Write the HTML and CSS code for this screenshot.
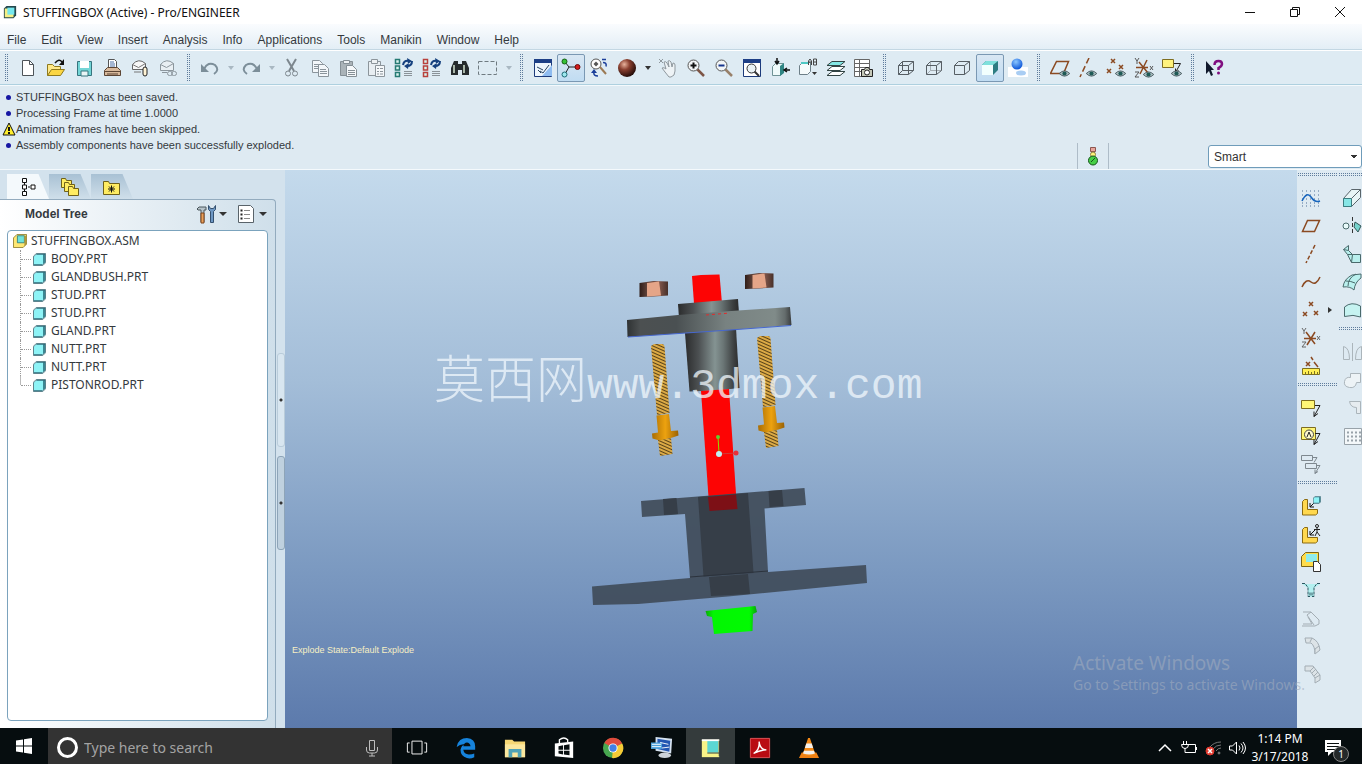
FILE: index.html
```html
<!DOCTYPE html>
<html lang="en">
<head>
    <meta charset="UTF-8">
    <meta name="viewport" content="width=device-width, initial-scale=1.0">
    <title>STUFFINGBOX (Active) - Pro/ENGINEER</title>
    <link rel="stylesheet" href="styles.css">
</head>
<body>

<!-- Shapes used more than once -->
<svg class="defs" aria-hidden="true">
    <symbol id="part" viewBox="0 0 14 14">
        <path d="M1 4l3-3h9v9l-3 3H1z" fill="#2f6a78"/>
        <path d="M1 4l2-2h8v10H1z" fill="#8ef3f6"/>
        <path d="M11 2h2v8l-2 2z" fill="#3b8793"/>
        <path d="M.5 3.5l3-3h10v10l-3 3H.5z" fill="none" stroke="#4a7580"/>
    </symbol>
    <symbol id="assembly" viewBox="0 0 16 16">
        <path d="M.5 4.500l4-4h11v11l-4 4H.5z" fill="#ffe873" stroke="#8b7a2c"/>
        <path d="M5 2h8v8H5z" fill="#6fe3da" stroke="#2e7f80"/>
        <path d="M13 2h2v10l-2 2z" fill="#b19a3a"/>
    </symbol>
    <symbol id="eye" viewBox="0 0 12 8">
        <path d="M0 4q6-6 12 0q-6 6-12 0z" fill="#a9bcc0" stroke="#44565a"/>
        <circle cx="6" cy="4" r="2.400" fill="#1f5a56"/>
    </symbol>
    <symbol id="bracket" viewBox="0 0 20 20">
        <path d="M1.500 5.500l2-2h3v10h10v4l-2 1.500h-13z" fill="#ffd84e" stroke="#8b6b12"/>
        <path d="M14 6l-5 5m0-4v4h4" stroke="#111" fill="none"/>
    </symbol>
    <symbol id="regen" viewBox="0 0 20 20">
        <path d="M1.500 1.500h4v4h-4zM1.500 8h4v4h-4zM1.500 14.500h4v4h-4z" fill="#d9f3ee" stroke="currentColor" stroke-width="1.500"/>
        <path d="M9 7q1-5 6-4M18 3q0 5-5 5" fill="none" stroke="#15407e" stroke-width="2"/>
        <path d="M13 0l5 3-4 3zM15 5l-5 3 4 3z" fill="#15407e"/>
        <path d="M10 13.500h8M10 15.500h8M10 17.500h8" stroke="#8a9298"/>
    </symbol>
</svg>

<header class="titlebar">
    <svg class="app-icon" viewBox="0 0 16 16"><path d="M1 4l3-3h11v11l-3 3H1z" fill="#25474c"/><path d="M2 4h10v10H2z" fill="#f6ef83"/><path d="M5 3h8v8H5z" fill="#75e8ee"/></svg>
    <h1>STUFFINGBOX (Active) - Pro/ENGINEER</h1>
    <div class="window-buttons">
        <button aria-label="Minimize"><svg viewBox="0 0 12 12"><path d="M1 6.500h10"/></svg></button>
        <button aria-label="Restore"><svg viewBox="0 0 12 12"><path d="M1.500 3.500h7v7h-7zM3.500 3.500v-2h7v7h-2"/></svg></button>
        <button aria-label="Close"><svg viewBox="0 0 12 12"><path d="M1 1l10 10M11 1L1 11"/></svg></button>
    </div>
</header>

<nav class="menubar">
    <button>File</button>
    <button>Edit</button>
    <button>View</button>
    <button>Insert</button>
    <button>Analysis</button>
    <button>Info</button>
    <button>Applications</button>
    <button>Tools</button>
    <button>Manikin</button>
    <button>Window</button>
    <button>Help</button>
</nav>

<div class="toolbar">
    <span class="grip"></span>
    <button class="tool" aria-label="New"><svg viewBox="0 0 20 20"><path d="M4.500 2.500h7l4 4v11h-11z" fill="#fff" stroke="#4d5358"/><path d="M11.500 2.500v4h4" stroke="#4d5358"/></svg></button>
    <button class="tool" aria-label="Open"><svg viewBox="0 0 20 20"><path d="M1.500 17.500v-11h5l2 2h6v3" fill="#ffe98a" stroke="#8f7a1d"/><path d="M1.500 17.500l4-6h13l-4 6z" fill="#fbd643" stroke="#8f7a1d"/><path d="M9 5q4-5 7-1" stroke="#111" stroke-width="1.500"/><path d="M18 1v6h-5z" fill="#111"/></svg></button>
    <button class="tool" aria-label="Save"><svg viewBox="0 0 20 20"><path d="M3.500 3.500h14v14h-14z" fill="#73d5d6" stroke="#37747e"/><path d="M6 3h9v7H6z" fill="#fff"/><path d="M7 13h7v5H7z" fill="#e9f5f6" stroke="#37747e"/></svg></button>
    <button class="tool" aria-label="Print"><svg viewBox="0 0 20 20"><path d="M6.500 9.500v-8h6l2 2v6" fill="#fff" stroke="#555"/><path d="M8 4h4M8 6h5M8 8h5" stroke="#4b6ea5"/><path d="M2.500 12.500l3-3h10l3 3v5h-16z" fill="#d8b99c" stroke="#5c4534"/><path d="M2 13.500h17M5 16h11" stroke="#5c4534"/></svg></button>
    <button class="tool" aria-label="Send mail"><svg viewBox="0 0 20 20"><path d="M2.500 11.500v-5q6-7 13-1v6z" fill="#f8f8f8" stroke="#666"/><path d="M2.500 6.500l6 3 7-4M4 14h7" stroke="#777"/><rect x="13" y="9" width="4" height="9" rx="2" fill="#fff3d4" stroke="#222"/></svg></button>
    <button class="tool" aria-label="Send link"><svg viewBox="0 0 20 20" stroke="#8c969d"><path d="M2.500 12.500v-6q6-7 13-1v7z" fill="#e9eff3"/><path d="M2.500 6.500l6 3 7-4M4 14.500h5"/><rect x="9.500" y="13.500" width="5" height="4" rx="2"/><rect x="13.500" y="13.500" width="5" height="4" rx="2"/></svg></button>
    <span class="grip"></span>
    <button class="tool" aria-label="Undo"><svg viewBox="0 0 20 20"><path d="M4 11q4-8 11-4 5 5-1 9" stroke="#7c8e99" stroke-width="2"/><path d="M1 6v8h8z" fill="#7c8e99"/></svg></button>
    <button class="drop faded" aria-label="Undo list"></button>
    <button class="tool" aria-label="Redo"><svg viewBox="0 0 20 20"><path d="M16 11q-4-8-11-4-5 5 1 9" stroke="#7c8e99" stroke-width="2"/><path d="M19 6v8h-8z" fill="#7c8e99"/></svg></button>
    <button class="drop faded" aria-label="Redo list"></button>
    <button class="tool" aria-label="Cut"><svg viewBox="0 0 20 20" stroke="#7d878e"><path d="M5 1l7 12M14 1L7 13" stroke-width="2"/><circle cx="6" cy="15.500" r="2.500"/><circle cx="13" cy="15.500" r="2.500"/></svg></button>
    <button class="tool" aria-label="Copy"><svg viewBox="0 0 20 20" stroke="#8a949b" fill="#f3f7fa"><path d="M2.500 2.500h7l3 3v9h-10z"/><path d="M4 6.500h6M4 8.500h6M4 10.500h6"/><path d="M8.500 6.500h6l4 4v8h-10z"/><path d="M10 11.500h6M10 13.500h7M10 15.500h7"/></svg></button>
    <button class="tool" aria-label="Paste"><svg viewBox="0 0 20 20" stroke="#858f95"><path d="M2.500 3.500h12v14h-12z" fill="#aab3b8"/><path d="M5.500 2.500h6v3h-6z" fill="#eef2f4"/><path d="M8.500 7.500h6l4 4v7h-10z" fill="#f5f8fa"/><path d="M10 12.500h7M10 14.500h7M10 16.500h7"/></svg></button>
    <button class="tool" aria-label="Paste special"><svg viewBox="0 0 20 20" stroke="#8c959b"><path d="M2.500 3.500h12v14h-12z" fill="#e8eef2"/><path d="M5.500 1.500h6v4h-6z" fill="#eef2f4"/><path d="M9.500 7.500h9v11h-9z" fill="#f5f8fa"/><path d="M11 10.500h2M11 13.500h2M11 16h2M14 10.500h3M14 13.500h3M14 16h3"/></svg></button>
    <button class="tool teal" aria-label="Regenerate"><svg><use href="#regen"/></svg></button>
    <button class="tool red" aria-label="Regenerate manager"><svg><use href="#regen"/></svg></button>
    <button class="tool" aria-label="Find"><svg viewBox="0 0 20 20"><path d="M4 3h4v3h4V3h4l3 7v7h-7v-5H8v5H1v-7z" fill="#262b2d"/><path d="M4 7v8M14 7v8" stroke="#a9b6a8" stroke-width="2"/></svg></button>
    <button class="tool" aria-label="Select box"><svg viewBox="0 0 20 20"><rect x=".5" y="3.500" width="18" height="13" stroke="#6f7a80" stroke-dasharray="4 2"/></svg></button>
    <button class="drop faded" aria-label="Select options"></button>
    <span class="grip"></span>
    <button class="tool" aria-label="Repaint"><svg viewBox="0 0 20 20"><path d="M1.500 1.500h17v17h-17z" fill="#eef6fd" stroke="#1c3a7a"/><path d="M1 1h18v4H1z" fill="#1d3f86"/><path d="M9 18l10-11v11z" fill="#8fbcf0"/><path d="M16 7l-6 8-3-2M4 9l6 3M5 12l3 3" stroke="#26415f"/></svg></button>
    <button class="tool pressed" aria-label="Spin center"><svg viewBox="0 0 20 20"><path d="M4 4l4 5h8M8 9l-4 7" stroke="#222"/><circle cx="3.500" cy="3.500" r="2.500" fill="#35c135" stroke="#146014"/><circle cx="16.500" cy="9" r="2.500" fill="#d31d1d" stroke="#6d0b0b"/><circle cx="3.500" cy="16.500" r="2.500" fill="#9ee8ef" stroke="#1d6a75"/></svg></button>
    <button class="tool" aria-label="Orient mode"><svg viewBox="0 0 20 20"><circle cx="7" cy="6" r="5" fill="#fff" stroke="#555"/><path d="M7 3.500l2.500 2.500L7 8.500 4.500 6z" fill="#555"/><path d="M11 9l6 7" stroke="#9c7a54" stroke-width="2"/><path d="M13 1.500h4M14 4.500q4 0 3 4M9 18q-5 0-4-4" stroke="#1c3f9a" stroke-width="1.500"/><path d="M2 15l3-4 3 4z" fill="#1c3f9a"/></svg></button>
    <button class="tool" aria-label="Appearance"><svg viewBox="0 0 20 20"><defs><radialGradient id="ball" cx=".35" cy=".3" r=".75"><stop offset="0" stop-color="#e8b29c"/><stop offset=".4" stop-color="#8a4030"/><stop offset="1" stop-color="#1c0805"/></radialGradient></defs><circle cx="10" cy="10" r="9" fill="url(#ball)"/></svg></button>
    <button class="drop" aria-label="Appearance list"></button>
    <button class="tool" aria-label="Pan"><svg viewBox="0 0 20 20" stroke="#8f989e"><path d="M1 1l4 4M5 1L1 5"/><path d="M7 14l-3-4q2-1 4 1L6 4q2-1 3 1l2 4-1-6q2-1 3 1l1 5 1-4q2 0 2 2v6q0 5-4 6H11z" fill="#eef3f6"/></svg></button>
    <button class="tool" aria-label="Zoom in"><svg viewBox="0 0 20 20"><path d="M11 11l7 7" stroke="#7d5546" stroke-width="2.500"/><circle cx="7.500" cy="7.500" r="5.500" fill="#f2f5f6" stroke="#555"/><path d="M4.500 7.500h6M7.500 4.500v6" stroke="#111" stroke-width="2"/></svg></button>
    <button class="tool" aria-label="Zoom out"><svg viewBox="0 0 20 20"><path d="M11 11l7 7" stroke="#98806a" stroke-width="2.500"/><circle cx="7.500" cy="7.500" r="5.500" fill="#f2f5f6" stroke="#555"/><path d="M4.500 7.500h6" stroke="#16348c" stroke-width="2"/></svg></button>
    <button class="tool" aria-label="Refit"><svg viewBox="0 0 20 20"><path d="M1.500 1.500h17v17h-17z" fill="#fff" stroke="#1c3a7a"/><path d="M1 1h18v4H1z" fill="#1d3f86"/><path d="M12 13l5 5" stroke="#333" stroke-width="2"/><circle cx="9.500" cy="10.500" r="4.500" fill="#eaf3f6" stroke="#333"/></svg></button>
    <button class="tool" aria-label="Reorient"><svg viewBox="0 0 20 20"><path d="M2.500 8.500l3-3h8v9l-3 3h-8z" fill="#effafa" stroke="#6f9295"/><path d="M10 8l4-3v10l-4 3z" fill="#2f8583"/><path d="M7 0v5m-2-2l2 3 2-3M20 12h-5m2-2l-3 2 3 2" stroke="#111" stroke-width="1.500"/></svg></button>
    <button class="tool" aria-label="Saved views"><svg viewBox="0 0 20 20"><path d="M1.500 7.500l3-3h8v9l-3 3h-8z" fill="#f6fbfc" stroke="#6d7f88"/><path d="M3 5h8" stroke="#4fc8c4" stroke-width="2"/><path d="M10.500 7V3l1.500-2 1.500 2v4m-3-3h3M15.500 1v6h3V1h-3m0 3h3" stroke="#444"/><path d="M14 14h5l-2.500 3z" fill="#333"/></svg></button>
    <button class="tool" aria-label="Layers"><svg viewBox="0 0 20 20" stroke="#344"><path d="M1 17.500l5-4h13l-5 4z" fill="#fff"/><path d="M1 12.500l5-4h13l-5 4z" fill="#fff"/><path d="M1 7.500l5-4h13l-5 4z" fill="#84e7e4"/></svg></button>
    <button class="tool" aria-label="View manager"><svg viewBox="0 0 20 20"><path d="M.5 1.500h15v17H.5zM5.500 1v17M1 5.500h14M1 9.500h14M1 13.500h14" fill="#fff" stroke="#666"/><path d="M7.500 11.500h3l1-2h3l1 2h3v7h-11z" fill="#c5c8b8" stroke="#222"/><circle cx="13" cy="14.500" r="2.500" fill="#fff" stroke="#222"/></svg></button>
    <span class="grip"></span>
    <button class="tool" aria-label="Wireframe"><svg viewBox="0 0 20 20" stroke="#565e64"><path d="M2.500 7.500h10v9h-10zM6.500 3.500h11v9h-11zM2.500 7.500l4-4M12.500 7.500l5-4M12.500 16.500l5-4M2.500 16.500l4-4"/></svg></button>
    <button class="tool" aria-label="Hidden line"><svg viewBox="0 0 20 20" stroke="#565e64"><path d="M6.500 3.500v9h11M2.500 16.500l4-4" stroke="#a4adb3"/><path d="M2.500 7.500h10v9h-10zl4-4h11v9l-5 4M12.500 7.500l5-4"/></svg></button>
    <button class="tool" aria-label="No hidden"><svg viewBox="0 0 20 20" stroke="#565e64"><path d="M2.500 7.500h10v9h-10zl4-4h11v9l-5 4M12.500 7.500l5-4"/></svg></button>
    <button class="tool pressed" aria-label="Shading"><svg viewBox="0 0 20 20"><path d="M2 7l4-4h12v9l-5 5H2z" fill="#2d7d82"/><path d="M2 7l4-4h12l-5 4z" fill="#7fe0dc"/><path d="M2 7h11v10H2z" fill="#f2fffe"/></svg></button>
    <button class="tool" aria-label="Enhanced realism"><svg viewBox="0 0 20 20"><defs><radialGradient id="bluedot" cx=".4" cy=".3" r=".7"><stop offset="0" stop-color="#8cc7ff"/><stop offset="1" stop-color="#0b55d8"/></radialGradient></defs><path d="M0 9h20v10H0z" fill="#fff"/><ellipse cx="13" cy="15" rx="5" ry="2.500" fill="#a9cdf3"/><circle cx="9" cy="6" r="5.500" fill="url(#bluedot)"/></svg></button>
    <span class="grip"></span>
    <button class="tool" aria-label="Plane display"><svg viewBox="0 0 20 20"><path d="M6.500 3.500h12l-5 12H.5z" stroke="#8b4a22" stroke-width="1.500"/><use href="#eye" x="9" y="12" width="11" height="7"/></svg></button>
    <button class="tool" aria-label="Axis display"><svg viewBox="0 0 20 20"><path d="M11 0L2 19" stroke="#8b4a22" stroke-width="1.500" stroke-dasharray="6 3"/><use href="#eye" x="8" y="12" width="11" height="7"/></svg></button>
    <button class="tool" aria-label="Point display"><svg viewBox="0 0 20 20"><path d="M5 1l4 4m0-4L5 5M13 7l4 4m0-4l-4 4M1 11l4 4m0-4l-4 4" stroke="#8b4a22" stroke-width="1.500"/><use href="#eye" x="9" y="12" width="11" height="7"/></svg></button>
    <button class="tool" aria-label="Coordinate display"><svg viewBox="0 0 20 20"><path d="M5 4l9 11M13 2L6 16M2 9.500h12" stroke="#8b4a22" stroke-width="1.500"/><path d="M1 0l2 3 2-3M3 3v3M1 14h4l-4 5h4M16 8l3 4m0-4l-3 4" stroke="#555"/><use href="#eye" x="9" y="13" width="11" height="7"/></svg></button>
    <button class="tool" aria-label="Annotation display"><svg viewBox="0 0 20 20"><path d="M.5 1.500h11v8H.5z" fill="#fff37d" stroke="#7e6d20"/><path d="M12 5.500h6.500l-5 9m0-4v4l3-2" stroke="#222"/><use href="#eye" x="9" y="12" width="11" height="7"/></svg></button>
    <span class="grip"></span>
    <button class="tool" aria-label="Context help"><svg viewBox="0 0 20 20"><path d="M2 3v13l3-3 2 5 2-1-2-5h3z" fill="#111a2c"/><path d="M10.500 7q0-4 4-4 3.500 0 3.500 3 0 2-3.500 4v2" stroke="#800f80" stroke-width="2.500"/><circle cx="14.500" cy="15" r="1.500" fill="#800f80"/></svg></button>
</div>

<section class="message-area">
    <ul class="messages">
        <li>STUFFINGBOX has been saved.</li>
        <li>Processing Frame at time 1.0000</li>
        <li class="warning"><svg viewBox="0 0 14 14"><path d="M7 1l6 12H1z" fill="#ffee2e" stroke="#111"/><path d="M7 5v4M7 10v2" stroke="#111" stroke-width="2"/></svg>Animation frames have been skipped.</li>
        <li>Assembly components have been successfully exploded.</li>
    </ul>
    <div class="status">
        <span class="regen-light"><svg viewBox="0 0 12 20"><path d="M3.500 1.500h5v4h-5z" fill="#e8a49b" stroke="#8c5750"/><circle cx="6" cy="8.500" r="2.500" fill="#fff27a" stroke="#8d8240"/><circle cx="6" cy="14.500" r="4.500" fill="#46cf46" stroke="#14521a"/><path d="M4 16l4-4" stroke="#14521a"/></svg></span>
        <select aria-label="Selection filter">
            <option>Smart</option>
            <option>Geometry</option>
            <option>Datums</option>
        </select>
    </div>
</section>

<main class="workspace">
    <aside class="navigator">
        <div class="nav-tabs">
            <button class="nav-tab active" aria-label="Model tree"><svg viewBox="0 0 20 20" stroke="#111"><path d="M4.500 1.500h4v4h-4zM4.500 8h4v4h-4zM4.500 14.500h4v4h-4zM13 8h4v4h-4zM6.500 6v2M6.500 12v2M10 10h2" fill="#fff"/></svg></button>
            <button class="nav-tab" aria-label="Folder browser"><svg viewBox="0 0 20 20" fill="#ffec62" stroke="#6f611b"><path d="M1.500 1.500h4l1 2h5v7h-10z"/><path d="M4.500 5.500h4l1 2h5v7h-10z"/><path d="M8.500 9.500h4l1 2h5v7h-10z"/></svg></button>
            <button class="nav-tab" aria-label="Favorites"><svg viewBox="0 0 20 20"><path d="M1.500 4.500h5l1 2h10v11h-16z" fill="#ffec62" stroke="#6f611b"/><path d="M9.500 8.500v7M6 12h7M7 9.500l5 5M12 9.500l-5 5" stroke="#111"/></svg></button>
        </div>
        <div class="nav-panel">
            <div class="nav-header">
                <h2>Model Tree</h2>
                <button class="nav-tool" aria-label="Settings"><svg viewBox="0 0 20 20"><path d="M1 5l2-2h7v3H8v12H5V6H2z" fill="#b8c4ca" stroke="#4a565d"/><path d="M5 9h3v10H5z" fill="#e9a05b" stroke="#7a431a"/><path d="M12.500 1.500v4l2 2v11h3v-11l2-2v-4l-2 3h-3z" fill="#6d97c4" stroke="#34506f"/></svg><span class="caret"></span></button>
                <button class="nav-tool" aria-label="Show"><svg viewBox="0 0 20 20"><path d="M2.500 1.500h12l3 3v14h-15z" fill="#fff" stroke="#59636a"/><path d="M8 6.500h6M8 10.500h6M8 14.500h6" stroke="#888"/><path d="M4.500 6.500h2M4.500 10.500h2M4.500 14.500h2" stroke="#222" stroke-width="2"/></svg><span class="caret"></span></button>
            </div>
            <div class="tree">
                <div class="tree-root"><svg><use href="#assembly"/></svg>STUFFINGBOX.ASM</div>
                <ul>
                    <li><svg><use href="#part"/></svg>BODY.PRT</li>
                    <li><svg><use href="#part"/></svg>GLANDBUSH.PRT</li>
                    <li><svg><use href="#part"/></svg>STUD.PRT</li>
                    <li><svg><use href="#part"/></svg>STUD.PRT</li>
                    <li><svg><use href="#part"/></svg>GLAND.PRT</li>
                    <li><svg><use href="#part"/></svg>NUTT.PRT</li>
                    <li><svg><use href="#part"/></svg>NUTT.PRT</li>
                    <li><svg><use href="#part"/></svg>PISTONROD.PRT</li>
                </ul>
            </div>
        </div>
        <div class="sashes">
            <button class="sash" aria-label="Collapse tree"></button>
            <button class="sash dark" aria-label="Collapse navigator"></button>
        </div>
    </aside>

    <section class="viewport">
        <svg class="model" viewBox="285 170 1012 558" role="img" aria-label="Exploded stuffing box assembly">
            <defs>
                <linearGradient id="tube"><stop offset="0" stop-color="#2b2c2d"/><stop offset=".25" stop-color="#4c5052"/><stop offset=".55" stop-color="#849392"/><stop offset=".7" stop-color="#6b7676"/><stop offset=".9" stop-color="#3c3f40"/><stop offset="1" stop-color="#2a2a2b"/></linearGradient>
                <linearGradient id="plate"><stop offset="0" stop-color="#2f3233"/><stop offset=".08" stop-color="#4c5051"/><stop offset=".3" stop-color="#4a5052"/><stop offset=".6" stop-color="#788281"/><stop offset=".9" stop-color="#808b89"/><stop offset=".96" stop-color="#656d6d"/><stop offset="1" stop-color="#3a3d3e"/></linearGradient>
                <linearGradient id="brass"><stop offset="0" stop-color="#a96d04"/><stop offset=".5" stop-color="#eda20f"/><stop offset="1" stop-color="#9a6205"/></linearGradient>
                <linearGradient id="green"><stop offset="0" stop-color="#0ba80b"/><stop offset=".15" stop-color="#02f602"/><stop offset=".85" stop-color="#02fa02"/><stop offset="1" stop-color="#0ba00b"/></linearGradient>
                <linearGradient id="nutside"><stop offset="0" stop-color="#2f1d18"/><stop offset=".25" stop-color="#5d4037"/><stop offset=".7" stop-color="#80564a"/><stop offset="1" stop-color="#47302a"/></linearGradient>
                <pattern id="thread" width="14" height="3" patternUnits="userSpaceOnUse" patternTransform="rotate(24)"><path d="M0 0h14v3H0z" fill="#dcaa45"/><path d="M0 2h14v1H0z" fill="#59431a"/></pattern>
            </defs>

            <!-- nuts -->
            <g id="nut"><path d="M639.500 283l14-2 14.500.5v14l-14 1-14.500.5z" fill="url(#nutside)"/><path d="M647 283l12-1.500 2 14-14 1z" fill="#e5a588"/></g>
            <use href="#nut" x="105.500" y="-8"/>

            <!-- rod top and gland -->
            <path d="M692 276l9-1 18.500-.5 2.500 29h-28z" fill="#fd0404"/>
            <path d="M678 304l60-5 1 15-60 4z" fill="url(#tube)"/>
            <path d="M685 333l51-5 3.500 60-9 1-28 2-13 .5z" fill="url(#tube)"/>
            <path d="M627 320l51-5 60-4.500 52-3.500 1.500 18-55 4.500-109 7.500z" fill="url(#plate)"/>
            <path d="M628 337l109-7.500 54-4" stroke="#4667cf"/>
            <path d="M706 315l24-2" stroke="#e02c2c" stroke-dasharray="3 3"/>

            <!-- piston rod -->
            <path d="M701 391l28-2 8 120-27.500 2z" fill="#fd0404"/>

            <!-- studs -->
            <g id="stud">
                <path d="M651 346l3-2h9l1.500 2 5 67-12.500 2z" fill="url(#thread)"/>
                <path d="M658 440l13-2 1.500 16-12.500 2z" fill="url(#thread)"/>
                <path d="M656.500 415.500l12.500-1.500 2 17 7-.5.500 5-6 2-13 3-7-2-.5-5 6-1z" fill="url(#brass)"/>
            </g>
            <use href="#stud" x="106" y="-8"/>

            <!-- transparent body -->
            <path d="M641 501l163.500-13 1.500 17-41.500 3.500L768 572l98-7 1 18-139 13.500-90 7.500-45 1-1-18.500 98-8.500-5-64-43 3z" fill="#414c5a" fill-opacity=".93"/>
            <path d="M698 497l50-4 5.500 80-50 3.500zM663 499l13.500-1 1.500 16-14 1zM768.500 491l13.500-1 1.500 16-14 1zM709 577l39-3 2 20-39 2z" fill="#363e48"/>
            <path d="M690 577l78-6" stroke="#2c333d"/>
            <path d="M708 497l28-2.500 1.500 14.500-28 2z" fill="#7d1016"/>

            <!-- gland bush -->
            <path d="M705.500 611l50-5 1.500 6-4 2-.5 17-38.500 3-2-17-5-1z" fill="url(#green)"/>

            <!-- spin center -->
            <path d="M718 437l1 16" stroke="#8ce000"/>
            <path d="M719 454l17-1" stroke="#d23a3a"/>
            <circle cx="718" cy="437" r="2" fill="#5fd02e"/><circle cx="736" cy="453" r="2.500" fill="#ea2f39"/><circle cx="719" cy="454" r="3" fill="#bff1f4"/>
        </svg>
        <p class="explode-state">Explode State:Default Explode</p>
        <p class="watermark"><span class="han">莫西网</span>www.3dmox.com</p>
        <div class="activate">
            <strong>Activate Windows</strong>
            <span>Go to Settings to activate Windows.</span>
        </div>
    </section>

    <aside class="feature-bar">
        <div class="feature-col">
            <span class="rule"></span>
            <button class="tool" aria-label="Sketch"><svg viewBox="0 0 20 20"><path d="M1 3h18M1 7h18M1 11h18M1 15h18M1 18h18" stroke="#4e6f96" stroke-dasharray="1 3"/><path d="M1 13q5-10 9-4t9 4" stroke="#1765bd" stroke-width="1.500"/></svg></button>
            <button class="tool" aria-label="Plane"><svg viewBox="0 0 20 20"><path d="M6.500 4.500h12l-5 11h-12z" stroke="#8b4a22" stroke-width="1.500"/></svg></button>
            <button class="tool" aria-label="Axis"><svg viewBox="0 0 20 20"><path d="M14 1L5 19" stroke="#8b4a22" stroke-width="1.500" stroke-dasharray="4 2"/></svg></button>
            <button class="tool" aria-label="Curve"><svg viewBox="0 0 20 20"><path d="M1 15q4-9 9-5t9-5" stroke="#8b4a22" stroke-width="1.500"/></svg></button>
            <div class="split">
                <button class="tool" aria-label="Point"><svg viewBox="0 0 20 20" stroke="#8b4a22" stroke-width="1.500"><path d="M8 2l4 4m0-4L8 6M2 12l4 4m0-4l-4 4M13 11l4 4m0-4l-4 4"/></svg></button>
                <button class="flyout" aria-label="More points"></button>
            </div>
            <button class="tool" aria-label="Coordinate system"><svg viewBox="0 0 20 20"><path d="M5 4l9 12M14 4L6 17M3 10.500h12" stroke="#8b4a22" stroke-width="1.500"/><path d="M1 0l2 3 2-3M3 3v3M1 14h4l-4 5h4M16 8l3 4m0-4l-3 4" stroke="#666"/></svg></button>
            <button class="tool" aria-label="Analysis"><svg viewBox="0 0 20 20"><path d="M5 6l4 4m0-4l-4 4M10 1l2 3M13 6l4 5" stroke="#8b4a22" stroke-width="1.500"/><path d="M1.500 12.500h17v6h-17z" fill="#ffef53" stroke="#7d7020"/><path d="M4.500 16v2M7.500 15v3M10.500 16v2M13.500 15v3M16.500 16v2" stroke="#7d7020"/></svg></button>
            <span class="rule"></span>
            <button class="tool" aria-label="Note"><svg viewBox="0 0 20 20"><path d="M.5 2.500h13v8H.5z" fill="#fff676" stroke="#7e6d20"/><path d="M14 7.500h5l-6 11m0-5v5l4-3" stroke="#222"/></svg></button>
            <button class="tool" aria-label="Annotation"><svg viewBox="0 0 20 20"><path d="M.5 1.500h14v12H.5z" fill="#fff676" stroke="#7e6d20"/><circle cx="8" cy="8.500" r="4.500" fill="#fffad0" stroke="#444"/><path d="M6 11l2-5 2 5M14 7.500h5l-6 11m0-5v5l4-3" stroke="#222"/></svg></button>
            <button class="tool" aria-label="Propagate"><svg viewBox="0 0 20 20" stroke="#7e888f"><path d="M.5 1.500h11v5H.5zM4.500 9.500h11v5h-11z"/><path d="M12 3.500h4l-3 5M16 11.500h3l-5 8m0-4v4l3-2"/></svg></button>
            <span class="rule"></span>
            <button class="tool" aria-label="Assemble"><svg viewBox="0 0 20 20"><use href="#bracket"/><use href="#part" x="12" y="0" width="8" height="8"/></svg></button>
            <button class="tool" aria-label="Manikin"><svg viewBox="0 0 20 20"><use href="#bracket"/><circle cx="16" cy="2" r="1.500" stroke="#222"/><path d="M13 5.500h6M16 3v5l-2 4M16 8l3 4" stroke="#222"/></svg></button>
            <button class="tool" aria-label="Create component"><svg viewBox="0 0 20 20"><path d="M.5 4.500l4-4h13v10l-4 4H.5z" fill="#ffdc4a" stroke="#7c6617"/><path d="M5 2h11v8H5z" fill="#8eeced"/><path d="M12.500 9.500h4l3 3v7h-7z" fill="#fff" stroke="#333"/></svg></button>
            <button class="tool" aria-label="Flexible"><svg viewBox="0 0 20 20"><path d="M1 4h18l-6 4v9H7V8z" fill="#b3f0f0"/><path d="M1 3.500h3l3 4v9h2v-5M19 3.500h-3l-3 4v9h-2v-5" stroke="#2c5660" stroke-dasharray="3 1"/></svg></button>
            <button class="tool" aria-label="Hole"><svg viewBox="0 0 20 20" stroke="#a3adb4"><path d="M2 4h8l8 8v4l-4 2H1M10 4l-4 3 7 10M2 16h9l-4-7"/></svg></button>
            <button class="tool" aria-label="Round"><svg viewBox="0 0 20 20" stroke="#a3adb4" fill="#dce3e7"><path d="M4 2h7q7 3 8 12l-5 4q0-8-4-11H5z"/><path d="M11 2l-2 4M14 18v-5l4-3"/></svg></button>
            <button class="tool" aria-label="Chamfer"><svg viewBox="0 0 20 20" stroke="#a3adb4" fill="#dce3e7"><path d="M4 2h8l7 9v5l-5 3v-5L9 7H4z"/><path d="M9 7l4-4M11 9l4-4M13 12l4-4M14 14l5-3"/></svg></button>
        </div>
        <div class="feature-col">
            <span class="rule"></span>
            <button class="tool" aria-label="Extrude"><svg viewBox="0 0 20 20"><path d="M1.500 10.500l8-9h9v8l-9 9h-8z" fill="#e8f5f6" stroke="#5a656b"/><path d="M1.500 10.500h8v8h-8z" fill="#86e6e6" stroke="#3a7d80"/><path d="M9.500 10.500l9-9" stroke="#5a656b"/></svg></button>
            <button class="tool" aria-label="Revolve"><svg viewBox="0 0 20 20"><path d="M10.500 1v18" stroke="#333" stroke-dasharray="4 2"/><circle cx="4" cy="10" r="3" fill="#e8fafa" stroke="#4a6a6c"/><path d="M13 6l6 4-3 6-4-5z" fill="#76d4ce" stroke="#355"/></svg></button>
            <button class="tool" aria-label="Sweep blend"><svg viewBox="0 0 20 20"><path d="M1.500 5.500l5-4v5l4 4h8v8h-9l-4-8z" fill="#b9efed" stroke="#4a6a6c"/><path d="M1.500 5.500l5 1M5.500 10.500l5 0-1 8" stroke="#4a6a6c"/></svg></button>
            <button class="tool" aria-label="Boundary blend"><svg viewBox="0 0 20 20"><path d="M1 15q1-8 9-12l9-1v4q-6 4-7 12-4-4-11-3z" fill="#baf0ee" stroke="#4a6a6c"/><path d="M4 9q5 0 9 2M6 14q0-8 8-12" stroke="#4a6a6c"/></svg></button>
            <button class="tool" aria-label="Style"><svg viewBox="0 0 20 20"><path d="M2.500 16.500V7q7-6 16-1v11q-7-3-16-.5z" fill="#c6f3f1" stroke="#4a6a6c"/></svg></button>
            <span class="rule"></span>
            <button class="tool" aria-label="Mirror"><svg viewBox="0 0 20 20" stroke="#abb5bb"><path d="M10.500 1v18M1.500 4.500q6 1 6 13h-6zM19.500 4.500q-6 1-6 13h6z"/></svg></button>
            <button class="tool" aria-label="Merge"><svg viewBox="0 0 20 20" stroke="#abb5bb"><path d="M8.500 3.500h10v9h-4q-1 6-7 5-6-1-5-6t6-4z" fill="#edf3f6"/></svg></button>
            <button class="tool" aria-label="Trim"><svg viewBox="0 0 20 20" stroke="#abb5bb"><path d="M7.500 3.500h11v12h-4v-6q-6 0-7-6z" fill="#e6ecf0"/></svg></button>
            <button class="tool" aria-label="Pattern"><svg viewBox="0 0 20 20"><path d="M2.500 2.500h17v16h-17z" fill="#f4f8fa" stroke="#98a2a9"/><path d="M5 6.500h14M5 10.500h14M5 14.500h14" stroke="#98a2a9" stroke-width="2" stroke-dasharray="2 2"/></svg></button>
        </div>
    </aside>
</main>

<footer class="taskbar">
    <button class="start" aria-label="Start"><svg viewBox="0 0 16 16" fill="#fff"><path d="M0 2.500l7-1v6H0zM8 1.300L16 0v7.500H8zM0 8.500h7v6l-7-1zM8 8.500h8V16l-8-1.300z"/></svg></button>
    <div class="search">
        <span class="cortana"></span>
        <input type="text" aria-label="Search" placeholder="Type here to search">
        <button aria-label="Speak"><svg viewBox="0 0 16 18" stroke="#bdbdbd"><path d="M5.500 1.500h5v10h-5zM2.500 8v3q0 3 3 3h5q3 0 3-3V8M8 14v3M5 17h6"/></svg></button>
    </div>
    <div class="apps">
        <button aria-label="Task view"><svg viewBox="0 0 24 24" stroke="#fff"><path d="M6.500 4.500h11v14h-11zM4 6.500H1.500v10H4M20 6.500h2.500v10H20"/></svg></button>
        <button aria-label="Edge"><svg viewBox="0 0 24 24"><path d="M2 10Q4 1 13 1q9 1 9 9v4H9q1 5 6 5 4 0 6-1v4q-4 2-8 1-7-2-7-9 1-5 5-6-5-1-9 3z" fill="#1683dc"/><path d="M9 10h8q-1-4-4-4t-4 4z" fill="#060d0f"/></svg></button>
        <button aria-label="File Explorer"><svg viewBox="0 0 24 24"><path d="M1 3h8l2 2h12v17H1z" fill="#f6d775"/><path d="M1 8h22v14H1z" fill="#fbe79e"/><path d="M5 22v-9h14v9h-4v-5H9v5z" fill="#4fa2b7"/></svg></button>
        <button aria-label="Store"><svg viewBox="0 0 24 24"><path d="M2 7l20-2v18L2 21z" fill="#fff"/><path d="M7 7V3q5-4 9 0v3" stroke="#fff" stroke-width="1.500"/><path d="M6 10l5-1v5H6zM12 9l6-1v6h-6zM6 15h5v4l-5-1zM12 15h6v5l-6-1z" fill="#091011"/></svg></button>
        <button aria-label="Chrome"><svg viewBox="0 0 24 24"><circle cx="12" cy="12" r="11" fill="#47a750"/><path d="M12 12L2.500 6.500A11 11 0 0122 7z" fill="#df4a3c"/><path d="M12 12L22 7A11 11 0 0111 23z" fill="#f6cb36"/><circle cx="12" cy="12" r="5" fill="#fff"/><circle cx="12" cy="12" r="4" fill="#427fe4"/></svg></button>
        <button aria-label="Remote desktop"><svg viewBox="0 0 24 24"><ellipse cx="15" cy="20" rx="7" ry="3" fill="#ccd3d9"/><path d="M5 0l18 2-1 16-17-3z" fill="#d6e3f1"/><path d="M7 2l14 2-1 12-13-3z" fill="#2356b2"/><path d="M0 6h12v7H0z" fill="#4da2dd"/><path d="M1 8h10M1 10.500h10M10 6l9 2M12 12l8-1" stroke="#fff"/></svg></button>
        <button class="current" aria-label="Pro/ENGINEER"><svg viewBox="0 0 24 24"><path d="M2 3h19v19H2z" fill="#f8f388"/><path d="M8 4h12v13H8z" fill="#5bd7d3"/><path d="M2 3.500h19" stroke="#fff" stroke-width="2"/><path d="M21 4v17M8 17.500h13" stroke="#30383a"/></svg></button>
        <button aria-label="Acrobat"><svg viewBox="0 0 24 24"><path d="M1.500 1.500h21v21h-21z" fill="#b90c12" stroke="#e5575b"/><path d="M5 18q7-4 6-13 1 9 8 9-7 0-14 4z" stroke="#fff" stroke-width="1.500"/></svg></button>
        <button aria-label="VLC"><svg viewBox="0 0 24 24"><path d="M4 17h16l3 6H1z" fill="#ef8013"/><path d="M11 1h2l6 18q-7 3-14 0z" fill="#f58a17"/><path d="M9 7h6l1.500 5h-9z" fill="#f4f1ed"/><path d="M6.500 15h11l1 3q-6 2-13 0z" fill="#f4f1ed"/></svg></button>
    </div>
    <div class="tray">
        <button aria-label="Hidden icons"><svg viewBox="0 0 18 18" stroke="#fff"><path d="M3 12l6-6 6 6" stroke-width="1.500"/></svg></button>
        <button aria-label="Battery"><svg viewBox="0 0 18 18" stroke="#fff"><path d="M8 5.500h7.500v8H5M16.500 8v3M3.500 2v3M6.500 2v3M1.500 5.500h7q0 4-3.500 4t-3.500-4M5 9v4.500"/></svg></button>
        <button aria-label="Network"><svg viewBox="0 0 18 18" stroke="#777"><path d="M6 8q4-5 11-5M9 10q3-4 8-4M12 12q2-3 5-3"/><circle cx="15" cy="14" r="1" fill="#777"/><circle cx="6" cy="12" r="4" fill="#e23b30" stroke="#e23b30"/><path d="M4 10l4 4M8 10l-4 4" stroke="#fff" stroke-width="1.500"/></svg></button>
        <button aria-label="Volume"><svg viewBox="0 0 18 18" stroke="#fff"><path d="M1.500 7h3L8.500 3v12l-4-4h-3zM11 6.500q2 2.500 0 5M13 4.500q4 4.500 0 9M15 3q5 6 0 12"/></svg></button>
        <time datetime="2018-03-17T13:14">1:14 PM<br>3/17/2018</time>
        <button class="notify" aria-label="Notifications"><svg viewBox="0 0 18 18"><path d="M1 1h16v12H8l-4 4v-4H1z" fill="#fff"/><path d="M3 4.500h12M3 7.500h12M3 10.500h8" stroke="#0a0f10"/></svg><span class="badge">1</span></button>
    </div>
</footer>

</body>
</html>
```
FILE: styles.css
```css
* {
    margin: 0;
    padding: 0;
    box-sizing: border-box;
}

body {
    display: flex;
    flex-direction: column;
    height: 100vh;
    overflow: hidden;
    font-family: "Liberation Sans", Arial, sans-serif;
    font-size: 12px;
    color: #34393d;
    background: #deeaf2;
}

button {
    border: none;
    background: none;
    font: inherit;
    color: inherit;
}

ul {
    list-style: none;
}

svg {
    flex: none;
}

svg:not([fill]) {
    fill: none;
}

.defs {
    display: none;
}

/* Title bar */
.titlebar {
    display: flex;
    align-items: center;
    height: 24px;
    flex: none;
    padding-left: 3px;
    background: #fff;
}

.app-icon {
    width: 14px;
    height: 14px;
}

.titlebar h1 {
    margin-left: 6px;
    font: 12px "Noto Sans", sans-serif;
    color: #111;
}

.window-buttons {
    display: flex;
    margin-left: auto;
}

.window-buttons button {
    display: flex;
    align-items: center;
    justify-content: center;
    width: 45px;
    height: 22px;
}

.window-buttons svg {
    width: 12px;
    height: 12px;
    stroke: #111;
}

/* Menu */
.menubar {
    display: flex;
    align-items: center;
    gap: 15px;
    height: 26px;
    flex: none;
    padding: 6px 7px 0;
    background: linear-gradient(#fafcfe, #e3eef6);
    border-bottom: 1px solid #c3d7e3;
}

/* Toolbars */
.toolbar {
    display: flex;
    align-items: center;
    height: 35px;
    flex: none;
    background: #deebf3;
    border-top: 1px solid #fff;
    border-bottom: 1px solid #aed0df;
}

.grip {
    width: 4px;
    height: 28px;
    margin: 0 6px 0 4px;
    background: conic-gradient(#5f7c9c 25%, transparent 0) 0 0 / 2px 2px;
}

.tool {
    display: flex;
    align-items: center;
    justify-content: center;
    width: 28px;
    height: 28px;
    flex: none;
}

.tool > svg {
    width: 20px;
    height: 20px;
}

.tool.pressed {
    border: 1px solid #7a98b3;
    border-radius: 2px;
    background: linear-gradient(#d9e7f3, #c0dcf2);
}

.teal {
    color: #267a73;
}

.red {
    color: #b8403c;
}

.drop {
    display: flex;
    align-items: center;
    justify-content: center;
    width: 13px;
    height: 28px;
    flex: none;
}

.drop::after,
.caret {
    content: "";
    border: 3px solid transparent;
    border-top: 4px solid #333;
    border-bottom: none;
}

.drop.faded::after {
    border-top-color: #a9b8c2;
}

/* Messages */
.message-area {
    display: flex;
    justify-content: space-between;
    height: 85px;
    flex: none;
    padding-top: 3px;
    border-top: 1px solid #f4f9fc;
    border-bottom: 1px solid #f4f9fc;
}

.messages {
    font-size: 11px;
    line-height: 16px;
}

.messages li {
    display: flex;
    align-items: center;
}

.messages li::before {
    content: "";
    width: 5px;
    height: 5px;
    margin: 0 5px 0 6px;
    border-radius: 50%;
    background: #1717a3;
}

.messages .warning::before {
    display: none;
}

.messages svg {
    width: 14px;
    height: 14px;
    margin-left: 2px;
}

.status {
    display: flex;
    align-items: flex-end;
}

.regen-light {
    display: flex;
    align-items: center;
    justify-content: center;
    width: 32px;
    height: 26px;
    margin-right: 99px;
    border: solid #aebcc8;
    border-width: 0 1px;
}

.regen-light svg {
    width: 12px;
    height: 20px;
}

.status select {
    width: 154px;
    height: 23px;
    margin-bottom: 1px;
    padding-left: 5px;
    appearance: none;
    border: 1px solid #6f9cba;
    border-radius: 3px;
    background:
        linear-gradient(to bottom right, #333 50%, transparent 50%) right 4px center / 3px 4px no-repeat,
        linear-gradient(to bottom left, #333 50%, transparent 50%) right 7px center / 3px 4px no-repeat,
        #fff;
    font: inherit;
    color: #333;
}

/* Workspace */
.workspace {
    display: flex;
    flex: 1;
    min-height: 0;
}

.navigator {
    display: grid;
    grid-template-columns: 276px 1fr;
    grid-template-rows: 29px 1fr;
    width: 285px;
    flex: none;
    background: #d3e2ed;
}

.nav-tabs {
    display: flex;
    grid-column: 1 / 3;
    padding: 4px 0 0 7px;
}

.nav-tab {
    display: flex;
    align-items: center;
    width: 42px;
    padding-left: 11px;
    background: linear-gradient(#a9c1d4, #cfdfea);
    clip-path: polygon(0 0, 75% 0, 100% 100%, 0 100%);
}

.nav-tab.active {
    background: #f4f9fc;
}

.nav-tab svg {
    width: 20px;
    height: 20px;
}

.nav-panel {
    display: flex;
    flex-direction: column;
    padding: 0 7px 7px;
    border: solid #93abbe;
    border-width: 1px 1px 0 0;
    border-top-right-radius: 4px;
    background: linear-gradient(90deg, #fff, #cfdfea);
}

.nav-header {
    display: flex;
    align-items: center;
    gap: 9px;
    height: 30px;
    flex: none;
    padding: 0 1px 2px 18px;
}

.nav-header h2 {
    flex: 1;
    font-size: 12px;
}

.nav-tool {
    display: flex;
    align-items: center;
    gap: 3px;
}

.nav-tool svg {
    width: 20px;
    height: 20px;
}

.caret {
    border-width: 4px 4px 0;
}

.tree {
    flex: 1;
    padding: 1px 5px;
    border: 1px solid #7ba3bd;
    border-radius: 4px;
    background: #fff;
    font: 12px/18px "Noto Sans", sans-serif;
}

.tree-root,
.tree li {
    display: flex;
    align-items: center;
}

.tree-root svg {
    width: 14px;
    height: 14px;
    margin-right: 4px;
}

.tree ul {
    margin-left: 7px;
}

.tree li {
    border-left: 1px dotted #999;
}

.tree li::before {
    content: "";
    width: 10px;
    margin-right: 2px;
    border-top: 1px dotted #999;
}

.tree li:last-child {
    border-image: linear-gradient(#bbb 50%, transparent 50%) 1;
}

.tree li svg {
    width: 13px;
    height: 13px;
    margin-right: 5px;
}

.sashes {
    display: flex;
    flex-direction: column;
    gap: 9px;
    padding: 154px 0 0 1px;
}

.sash {
    width: 8px;
    height: 94px;
    border: 1px solid #b9ccda;
    border-radius: 3px;
    background: radial-gradient(circle, #333 1px, transparent 2px), #d8e6f0;
}

.sash.dark {
    border-color: #8da4b8;
    background: radial-gradient(circle, #333 1px, transparent 2px), #bfd1df;
}

/* Graphics window */
.viewport {
    position: relative;
    flex: 1;
    min-width: 0;
    background: linear-gradient(#c4daec, #a3bdd8 38%, #7c9ac1 71%, #5c7aac);
}

.model {
    display: block;
    width: 100%;
    height: 100%;
}

.explode-state {
    position: absolute;
    left: 7px;
    bottom: 73px;
    font-size: 9px;
    color: #f6efc4;
}

.watermark {
    position: absolute;
    left: 149px;
    top: 176px;
    font: 43px/60px "Liberation Mono", monospace;
    color: rgba(240, 247, 252, 0.75);
    white-space: nowrap;
}

.watermark .han {
    font: 300 51px/60px "Noto Sans CJK SC", sans-serif;
}

.activate {
    position: absolute;
    z-index: 1;
    left: 788px;
    bottom: 33px;
    display: flex;
    flex-direction: column;
    font-family: "Noto Sans", sans-serif;
    color: rgba(160, 172, 190, 0.6);
    white-space: nowrap;
}

.activate strong {
    font-size: 19px;
    font-weight: 400;
    line-height: 24px;
}

.activate span {
    font-size: 14px;
    line-height: 20px;
}

/* Feature tools */
.feature-bar {
    display: flex;
    width: 65px;
    flex: none;
    overflow: hidden;
}

.feature-col {
    width: 41px;
    flex: none;
}

.rule {
    display: block;
    height: 4px;
    margin: 3px 0 7px;
    background: conic-gradient(#5f7c9c 25%, transparent 0) 0 0 / 2px 2px;
}

.split {
    display: flex;
    align-items: center;
}

.flyout {
    margin-left: 3px;
    border: 3px solid transparent;
    border-left: 4px solid #333;
    border-right: none;
}

/* Taskbar */
.taskbar {
    display: flex;
    height: 36px;
    flex: none;
    background: #060d0f;
    font-family: "Noto Sans", sans-serif;
    color: #fff;
}

.taskbar button {
    display: flex;
    align-items: center;
    justify-content: center;
}

.start {
    width: 48px;
}

.start svg {
    width: 16px;
    height: 16px;
}

.search {
    display: flex;
    align-items: center;
    width: 344px;
    padding: 3px 12px 0 9px;
    background: #333;
}

.cortana {
    width: 21px;
    height: 21px;
    border: 3px solid #fff;
    border-radius: 50%;
}

.search input {
    flex: 1;
    min-width: 0;
    padding-left: 6px;
    border: none;
    outline: none;
    background: none;
    font: 14px "Noto Sans", sans-serif;
    color: #fff;
}

.search input::placeholder {
    color: #a3a3a3;
}

.search button,
.search svg {
    width: 16px;
    height: 18px;
}

.apps {
    display: flex;
}

.apps button {
    width: 49px;
    padding-top: 3px;
}

.apps .current {
    background: #343b3c;
}

.apps svg {
    width: 22px;
    height: 22px;
}

.tray {
    display: flex;
    align-items: center;
    margin-left: auto;
    padding: 3px 17px 0 0;
}

.tray button {
    position: relative;
    width: 24px;
}

.tray svg {
    width: 18px;
    height: 18px;
}

.tray time {
    width: 62px;
    font-size: 12px;
    line-height: 18px;
    text-align: center;
}

.tray .notify {
    margin-left: 10px;
}

.badge {
    position: absolute;
    left: 12px;
    top: 7px;
    width: 16px;
    height: 16px;
    border: 1px solid #888;
    border-radius: 50%;
    background: #24292a;
    font-size: 10px;
    line-height: 14px;
}
```
